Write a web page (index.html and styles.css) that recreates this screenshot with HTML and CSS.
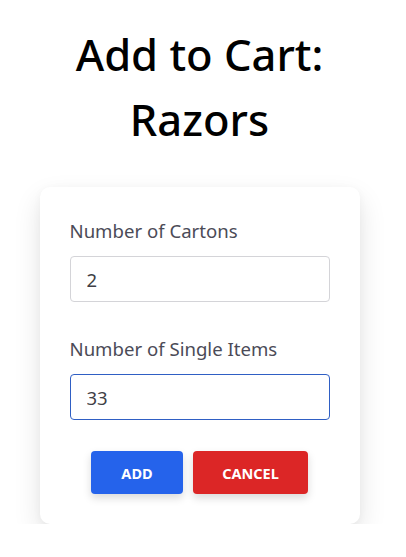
FILE: index.html
```html
<!DOCTYPE html>
<html>
<head>
<meta charset="utf-8">
<link rel="stylesheet" href="styles.css">
</head>
<body>
<main class="page">
  <h1 class="title">Add to Cart:<br>Razors</h1>
  <form class="card">
    <label class="field">
      <span class="label">Number of Cartons</span>
      <input class="input" type="text" value="2">
    </label>
    <label class="field">
      <span class="label">Number of Single Items</span>
      <input class="input input-focus" type="text" value="33">
    </label>
    <div class="actions">
      <button type="button" class="btn btn-add">ADD</button>
      <button type="button" class="btn btn-cancel">CANCEL</button>
    </div>
  </form>
</main>
</body>
</html>
```
FILE: styles.css
```css
* { box-sizing: border-box; }
html, body { margin: 0; padding: 0; background: #fff; }
body { font-family: "Noto Sans", "Open Sans", sans-serif; }
.page {
  display: flex;
  flex-direction: column;
  align-items: center;
  padding: 22px 7px 0 0;
}
.title {
  margin: 0;
  font-size: 43.5px;
  line-height: 65px;
  font-weight: 500;
  text-align: center;
  color: #000;
}
.card {
  margin-top: 35px;
  width: 320px;
  background: #fff;
  border-radius: 10px;
  box-shadow: 0 12px 28px rgba(0,0,0,0.11), 0 2px 8px rgba(0,0,0,0.04);
  padding: 30px 30px 30px;
  display: flex;
  flex-direction: column;
}
.field { display: flex; flex-direction: column; }
.field + .field { margin-top: 33px; }
.label {
  font-size: 18.6px;
  line-height: 28px;
  color: #4b4b57;
  margin-bottom: 11px;
}
.input {
  height: 46px;
  border: 1px solid #d4d4d8;
  border-radius: 4px;
  padding: 0 16px;
  font-family: inherit;
  font-size: 18.5px;
  color: #3f3f46;
  outline: none;
}
.input-focus { border-color: #2f5fc4; }
.actions {
  margin-top: 31px;
  display: flex;
  justify-content: center;
  gap: 10px;
}
.btn {
  height: 43px;
  border: none;
  border-radius: 4px;
  color: #fff;
  font-family: inherit;
  font-size: 14.5px;
  font-weight: 700;
  box-shadow: 0 4px 8px rgba(0,0,0,0.15);
}
.btn-add { width: 92px; background: #2563eb; }
.btn-cancel { width: 115px; background: #dc2626; }
```
